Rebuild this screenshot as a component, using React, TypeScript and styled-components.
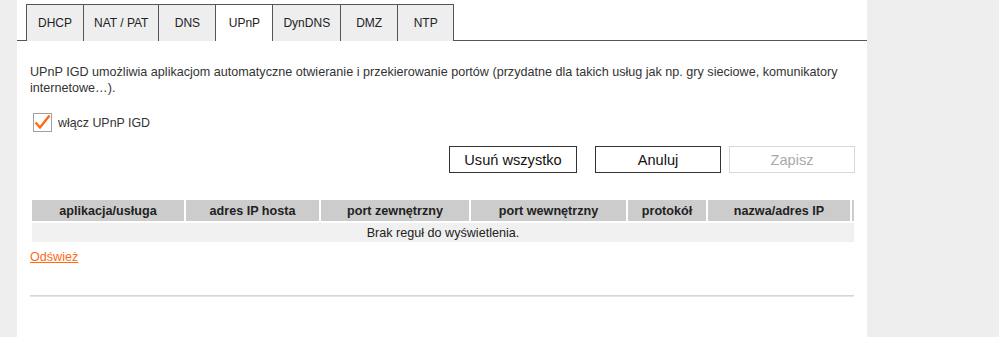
import React from "react";
import styled, { createGlobalStyle } from "styled-components";

const GlobalStyle = createGlobalStyle`
    html, body {
        margin: 0;
        padding: 0;
        background: #eeeeee;
        font-family: Arial, "Liberation Sans", sans-serif;
        color: #333;
    }
`;

const Page = styled.div`
    display: flex;
    min-height: 337px;
    padding-left: 17px;
`;

const Panel = styled.div`
    width: 850px;
    background: #fff;
    display: flex;
    flex-direction: column;
    padding-top: 4px;
`;

const TabBar = styled.div`
    display: flex;
    padding-left: 9px;
    border-bottom: 1px solid #555;
`;

const Tab = styled.div<{ $active?: boolean }>`
    box-sizing: border-box;
    height: 37px;
    min-width: 57px;
    padding: 0 10px;
    margin-bottom: -1px;
    display: flex;
    align-items: center;
    justify-content: center;
    font-size: 12px;
    color: #222;
    background: ${(p) => (p.$active ? "#fff" : "#eeeeee")};
    border-top: 1px solid #555;
    border-left: 1px solid #555;
    &:last-child {
        border-right: 1px solid #555;
    }
`;

const Content = styled.div`
    padding: 0 13px;
    display: flex;
    flex-direction: column;
`;

const Description = styled.p`
    margin: 23px 0 0;
    font-size: 12.6px;
    line-height: 16px;
    width: 825px;
    color: #333;
`;

const CheckRow = styled.label`
    display: flex;
    align-items: center;
    gap: 6px;
    margin-top: 17px;
    padding-left: 3px;
    font-size: 12.4px;
    color: #333;
`;

const CheckBox = styled.span`
    box-sizing: border-box;
    width: 19px;
    height: 19px;
    border: 1px solid #a0a0a0;
    background: #fff;
    display: flex;
    align-items: center;
    justify-content: center;
`;

const ButtonRow = styled.div`
    display: flex;
    justify-content: flex-end;
    margin-top: 14px;
    width: 825px;
`;

const Button = styled.button<{ $disabled?: boolean; $gap?: number; $wide?: boolean }>`
    box-sizing: border-box;
    height: 27px;
    width: ${(p) => (p.$wide ? 128 : 126)}px;
    margin-left: ${(p) => p.$gap ?? 0}px;
    background: #fff;
    border: 1px solid ${(p) => (p.$disabled ? "#d8d8d8" : "#333")};
    color: ${(p) => (p.$disabled ? "#aaa" : "#111")};
    font-family: Arial, "Liberation Sans", sans-serif;
    font-size: 14.6px;
    padding: 0;
    cursor: pointer;
`;

const Table = styled.div`
    margin: 27px 0 0 2px;
    width: 822px;
`;

const HeadRow = styled.div`
    display: grid;
    grid-template-columns: 152px 133px 148px 155px 78px 142px 2px;
    column-gap: 2px;
`;

const HeadCell = styled.div`
    background: #cccccc;
    height: 21px;
    display: flex;
    align-items: center;
    justify-content: center;
    font-size: 12.6px;
    font-weight: bold;
    color: #222;
`;

const EmptyRow = styled.div`
    margin-top: 2px;
    height: 19px;
    background: #f0f0f0;
    display: flex;
    align-items: center;
    justify-content: center;
    font-size: 12.6px;
    color: #222;
`;

const RefreshLink = styled.a`
    margin-top: 7px;
    align-self: flex-start;
    font-size: 12.6px;
    line-height: 16px;
    color: #ff6a13;
    text-decoration: underline;
    cursor: pointer;
`;

const Divider = styled.div`
    margin-top: 30px;
    width: 824px;
    border-top: 1px solid #d6d6d6;
    border-bottom: 1px solid #e6e6e6;
`;

const tabs = ["DHCP", "NAT / PAT", "DNS", "UPnP", "DynDNS", "DMZ", "NTP"];
const columns = [
    "aplikacja/usługa",
    "adres IP hosta",
    "port zewnętrzny",
    "port wewnętrzny",
    "protokół",
    "nazwa/adres IP",
    "",
];

const App: React.FC = () => {
    return (
        <>
            <GlobalStyle />
            <Page>
                <Panel>
                    <TabBar>
                        {tabs.map((t) => (
                            <Tab key={t} $active={t === "UPnP"}>
                                {t}
                            </Tab>
                        ))}
                    </TabBar>
                    <Content>
                        <Description>
                            UPnP IGD umożliwia aplikacjom automatyczne otwieranie i przekierowanie portów
                            (przydatne dla takich usług jak np. gry sieciowe, komunikatory internetowe…).
                        </Description>
                        <CheckRow>
                            <CheckBox>
                                <svg width="17" height="17" viewBox="0 0 17 17">
                                    <path d="M1.5 8.5 L6 13.5 L15.5 1.5" fill="none" stroke="#ff6a13" strokeWidth="2.4" />
                                </svg>
                            </CheckBox>
                            włącz UPnP IGD
                        </CheckRow>
                        <ButtonRow>
                            <Button $wide>Usuń wszystko</Button>
                            <Button $gap={18}>Anuluj</Button>
                            <Button $gap={8} $disabled>Zapisz</Button>
                        </ButtonRow>
                        <Table>
                            <HeadRow>
                                {columns.map((c, i) => (
                                    <HeadCell key={i}>{c}</HeadCell>
                                ))}
                            </HeadRow>
                            <EmptyRow>Brak reguł do wyświetlenia.</EmptyRow>
                        </Table>
                        <RefreshLink>Odśwież</RefreshLink>
                        <Divider />
                    </Content>
                </Panel>
            </Page>
        </>
    );
};

export default App;
